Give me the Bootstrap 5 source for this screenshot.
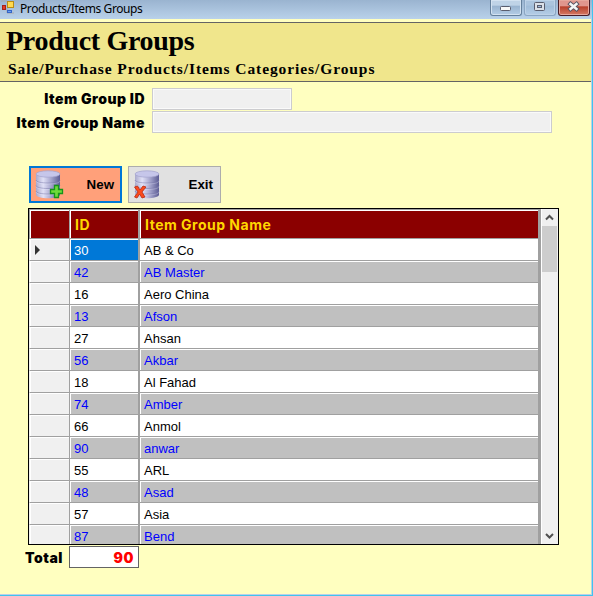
<!DOCTYPE html>
<html lang="en">
<head>
<meta charset="utf-8">
<title>Products/Items Groups</title>
<link href="https://cdn.jsdelivr.net/npm/bootstrap@5.3.0/dist/css/bootstrap.min.css" rel="stylesheet">
<style>
body{width:593px;height:596px;background:#ffffc0;font-family:"Liberation Sans",Arial,sans-serif;font-size:13.33px;color:#000;line-height:1}
.window{width:593px;height:596px;border-right:1px solid #3fc4ee;border-bottom:1px solid #3fc4ee}
.window-in{border-right:1px solid #b9d0ea;border-bottom:1px solid #b9d0ea}
.titlebar{height:19px;margin-right:-1px;background:linear-gradient(#9ab4d0,#b9d1ea);font:12px/17px "Noto Sans","Open Sans",sans-serif;letter-spacing:-.4px}
.titlebar .app-icon{margin-left:1px}
.titlebar .caption{margin-left:5px}
.wbtns{gap:2px;margin-right:2px}
.wbtn{width:32px;height:16px;border:1px solid #65809c;border-top:0;border-radius:0 0 3px 3px;background:linear-gradient(#bfd3e7 0 35%,#98b3cf 40%,#b4cde6);box-shadow:inset 0 0 0 1px #d3e2f1}
.wbtn.dim{border-color:#8ba6c3;background:linear-gradient(#abc4de 0 35%,#a0bcd9 40%,#b4cde6);box-shadow:inset 0 0 0 1px #bdd2e8}
.wbtn.close-x{border-color:#481c26;background:linear-gradient(#e0968d 0 40%,#b8402b 45%,#d57a64);box-shadow:inset 0 0 0 1px #e6a79c}
.heading{height:60px;margin-top:3px;background:#f0e68c;border:solid #646464;border-width:1px 0;font-family:"Liberation Serif",serif;font-weight:700}
.heading h1{font:700 28px/32px "Liberation Serif",serif;margin:2px 0 0 6px;letter-spacing:-.3px}
.heading p{font-size:15.5px;line-height:18px;margin:3px 0 0 8px;letter-spacing:.91px;white-space:nowrap}
.heavy{font-family:Inter,"Open Sans",sans-serif;font-weight:900;font-size:14px;letter-spacing:.5px}
.fields{padding:6px 0 0;height:84px}
.fields label{width:145px;margin-right:7px}
.fields .name-row{margin-top:1px}
.fields .name-row label{padding-top:2px}
.fld{height:22px;background:#f0f0f0;border:1px solid #cccccf;box-shadow:inset 0 0 0 1px #fafafa}
.w-id{width:140px}.w-name{width:400px}
.actions{padding-left:29px;height:42px;gap:6px}
.act{width:93px;height:37px;border:1px solid #adadad;background:#e1e1e1;padding:0 7px 0 5px;font-size:13.33px;font-weight:700}
.act.new{background:#ffa07a;border:2px solid #0078d7;padding:0 6px 0 4px}
.gridbox{width:531px;height:337px;margin-left:28px;border:1px solid #000;background:#fff}
.cells{width:512px;table-layout:fixed;border-collapse:separate;border-spacing:0;line-height:19px}
.cells th,.cells td{height:22px;padding:0 4px;border-bottom:1px solid #a0a0a0;box-shadow:inset 1px 1px #fff;white-space:nowrap;border-right:2px solid #a0a0a0}
.cells td{font-size:13px}
.cells th:first-child,.cells td:first-child{border-right-width:1px;border-left:1px solid #a0a0a0}
.cells td:first-child{background:#f0f0f0;padding:0 0 0 4px;border-left-color:#f0f0f0}
.cells td:last-child,.cells th:last-child{border-right:3px solid #a0a0a0}
.cells th{height:30px;border-top:1px solid #a0a0a0;background:#8b0000;color:gold;padding:0 5px;line-height:27px}
.cells tr.alt td:not(:first-child){background:#c0c0c0;color:#00f}
.cells td.sel{background:#0078d7;color:#fff}
.cells td:nth-child(n+2){padding-top:2px}
.sbar{width:17px;background:#f0f0f0;border-left:1px solid #fff}
.thumb{width:15px;height:46px;background:#cdcdcd}
.total{margin-top:1px}
.total label{width:63px;margin-right:6px;padding-top:2px}
.total output{width:70px;height:22px;background:#fff;border:1px solid #646464;color:#f00;padding:1px 4px 0 0}
</style>
<script src="https://cdn.jsdelivr.net/npm/bootstrap@5.3.0/dist/js/bootstrap.bundle.min.js"></script>
</head>
<body class="overflow-hidden">
<svg width="0" height="0" class="position-absolute"><defs>
<linearGradient id="g"><stop offset="0" stop-color="#a9a9cc"/><stop offset=".3" stop-color="#e0e0f6"/><stop offset=".55" stop-color="#b4b4d8"/><stop offset="1" stop-color="#5c5c94"/></linearGradient>
<g id="db"><path d="M1 4v20.500c0 5 24 5 24 0V4z" fill="url(#g)"/><ellipse cx="13" cy="4" rx="12" ry="3.200" fill="#c6c6ea" stroke="#a2a2cc" stroke-width=".7"/><path d="M1 10c0 4 24 4 24 0M1 15.500c0 4 24 4 24 0M1 21c0 4 24 4 24 0" fill="none" stroke="#7777a8" stroke-width=".7" opacity=".7"/><path d="M1 11c0 4 24 4 24 0M1 16.500c0 4 24 4 24 0M1 22c0 4 24 4 24 0" fill="none" stroke="#e8e8fa" stroke-width=".6" opacity=".5"/></g>
</defs></svg>
<div class="window"><div class="window-in h-100 d-flex flex-column">
<div class="titlebar d-flex align-items-start flex-shrink-0">
<svg width="14" height="14" viewBox="0 0 14 14" class="app-icon"><path d="M0 1h6M6 8v5h7" stroke="#a8a8a8" fill="none"/><rect x="1.500" y="5.500" width="3" height="4" fill="#e43b24" stroke="#a5221a"/><rect x="6.500" y="1.500" width="6" height="6" fill="#ffd94f" stroke="#b88b16"/><rect x="6.500" y="10.500" width="4" height="2" fill="#6aa2f2" stroke="#3465c8"/></svg>
<span class="caption">Products/Items Groups</span>
<div class="wbtns d-flex ms-auto">
<div class="wbtn"><svg class="d-block" width="30" height="15"><rect x="9.500" y="6.500" width="10" height="4" rx="1" fill="#f8f8f8" stroke="#595d6e"/></svg></div>
<div class="wbtn dim"><svg class="d-block" width="30" height="15"><rect x="9.500" y="2.500" width="10" height="8" rx="1" fill="#dbe0e8" stroke="#595d6e"/><rect x="12.500" y="5.500" width="4" height="2" fill="#9fbbdc" stroke="#595d6e"/></svg></div>
<div class="wbtn close-x"><svg class="d-block" width="30" height="15"><path d="M11.500 4l6 5M17.500 4l-6 5" stroke="#595463" stroke-width="4.400" stroke-linecap="square"/><path d="M11.500 4l6 5M17.500 4l-6 5" stroke="#f5f5f5" stroke-width="2.400" stroke-linecap="square"/></svg></div>
</div></div>
<header class="heading flex-shrink-0"><h1>Product Groups</h1><p>Sale/Purchase Products/Items Categories/Groups</p></header>
<form class="fields flex-shrink-0">
<div class="d-flex align-items-center"><label class="heavy text-end">Item Group ID</label><div class="fld w-id"></div></div>
<div class="name-row d-flex align-items-center"><label class="heavy text-end">Item Group Name</label><div class="fld w-name"></div></div>
</form>
<div class="actions d-flex flex-shrink-0">
<button class="act new d-flex align-items-center justify-content-between"><svg width="30" height="31" viewBox="0 0 30 31"><use href="#db" y="1"/><path d="M19.500 16.500h4v4h4v4h-4v4h-4v-4h-4v-4h4z" fill="#6edb3a" stroke="#16941a" stroke-width="1.300"/></svg><span>New</span></button>
<button class="act d-flex align-items-center justify-content-between"><svg width="30" height="31" viewBox="0 0 30 31"><use href="#db" y="1"/><path d="M.5 18l3-1 2.500 4 3-4 3 1-4 5 3 5-3 1-2.500-4-2.500 4-2.500-1 3.500-5z" fill="#fb4a1d" stroke="#b72a10" stroke-width=".8"/></svg><span>Exit</span></button>
</div>
<div class="gridbox d-flex flex-shrink-0 overflow-hidden">
<div class="overflow-hidden flex-shrink-0"><table class="cells"><colgroup><col style="width:41px"><col style="width:70px"><col></colgroup>
<thead class="heavy"><tr><th></th><th>ID</th><th>Item Group Name</th></tr></thead>
<tbody>
<tr><td><svg class="d-block" width="6" height="10"><path d="M1 0l5 5-5 5z" fill="#333"/></svg></td><td class="sel">30</td><td>AB &amp; Co</td></tr>
<tr class="alt"><td></td><td>42</td><td>AB Master</td></tr>
<tr><td></td><td>16</td><td>Aero China</td></tr>
<tr class="alt"><td></td><td>13</td><td>Afson</td></tr>
<tr><td></td><td>27</td><td>Ahsan</td></tr>
<tr class="alt"><td></td><td>56</td><td>Akbar</td></tr>
<tr><td></td><td>18</td><td>Al Fahad</td></tr>
<tr class="alt"><td></td><td>74</td><td>Amber</td></tr>
<tr><td></td><td>66</td><td>Anmol</td></tr>
<tr class="alt"><td></td><td>90</td><td>anwar</td></tr>
<tr><td></td><td>55</td><td>ARL</td></tr>
<tr class="alt"><td></td><td>48</td><td>Asad</td></tr>
<tr><td></td><td>57</td><td>Asia</td></tr>
<tr class="alt"><td></td><td>87</td><td>Bend</td></tr>
</tbody></table></div>
<div class="sbar d-flex flex-column">
<svg class="d-block flex-shrink-0" width="15" height="17"><path d="M4 10.500l3.500-3.500 3.500 3.500" fill="none" stroke="#505050" stroke-width="2"/></svg>
<div class="thumb"></div>
<svg class="d-block mt-auto" width="15" height="17"><path d="M4 7l3.500 3.500L11 7" fill="none" stroke="#505050" stroke-width="2"/></svg>
</div></div>
<div class="total d-flex align-items-center heavy"><label class="text-end">Total</label><output class="d-flex align-items-center justify-content-end">90</output></div>
</div></div>
</body>
</html>
